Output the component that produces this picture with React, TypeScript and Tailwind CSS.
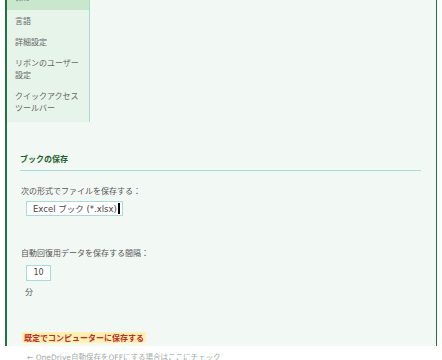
const menu = ["言語", "詳細設定", "リボンのユーザー設定", "クイックアクセスツールバー"];

export default function App() {
  return (
    <div className="h-[360px] w-[442px] overflow-hidden bg-white font-['Noto_Sans_CJK_JP',sans-serif] text-[8px]">
      <div className="ml-[5px] h-full w-[432px] border-l-2 border-r border-[#217346] bg-[#f2f9f5]">
        {/* side menu */}
        <div className="w-[83px] border-r border-[#a6dcd8] bg-[#e6f4ea] pb-[4px] text-[#666]">
          <div className="-mt-[14px] bg-[#c9e7cd] px-[8px] pb-[7.5px] pt-[4.5px] leading-[12px]">保存</div>
          {menu.map((m) => (
            <div key={m} className="px-[8px] py-[4.5px] leading-[12px]">
              {m}
            </div>
          ))}
        </div>

        {/* settings */}
        <div className="pl-[13px] pr-[15px] pt-[31px]">
          <div className="border-b border-[#a8dcd9] pb-[5px] font-bold leading-[12px] text-[#1d5e2a]">
            ブックの保存
          </div>

          <div className="mt-[14px] pl-px leading-[12px] text-[#555]">次の形式でファイルを保存する：</div>
          <div className="ml-[6px] mt-[4px] flex h-[15px] w-[97px] items-center border border-[#a8dcd9] bg-white pl-[6px] font-['DejaVu_Sans','Noto_Sans_CJK_JP',sans-serif] text-[8.5px] text-[#444]">
            <span className="leading-[12px]">Excel ブック (*.xlsx)</span>
            <span className="ml-px h-[11px] w-[2px] bg-black" />
          </div>

          <div className="mt-[31px] pl-px leading-[12px] text-[#555]">自動回復用データを保存する間隔：</div>
          <div className="ml-[6px] mt-[6px] flex h-[16px] w-[25px] items-center justify-center border border-[#a8dcd9] bg-white font-['DejaVu_Sans',sans-serif] text-[#444]">
            10
          </div>
          <div className="ml-[5px] mt-[5px] leading-[12px] text-[#555]">分</div>

          <div className="ml-[2px] mt-[34px] inline-block bg-[#fff2b0] px-[2px] font-bold leading-[11px] text-[#c62828]">
            既定でコンピューターに保存する
          </div>
          <div className="ml-[7px] mt-[8px] font-['DejaVu_Sans','Noto_Sans_CJK_JP',sans-serif] text-[7.5px] leading-[12px] text-[#a3aba8]">
            ← OneDrive自動保存をOFFにする場合はここにチェック
          </div>
        </div>
      </div>
    </div>
  );
}
